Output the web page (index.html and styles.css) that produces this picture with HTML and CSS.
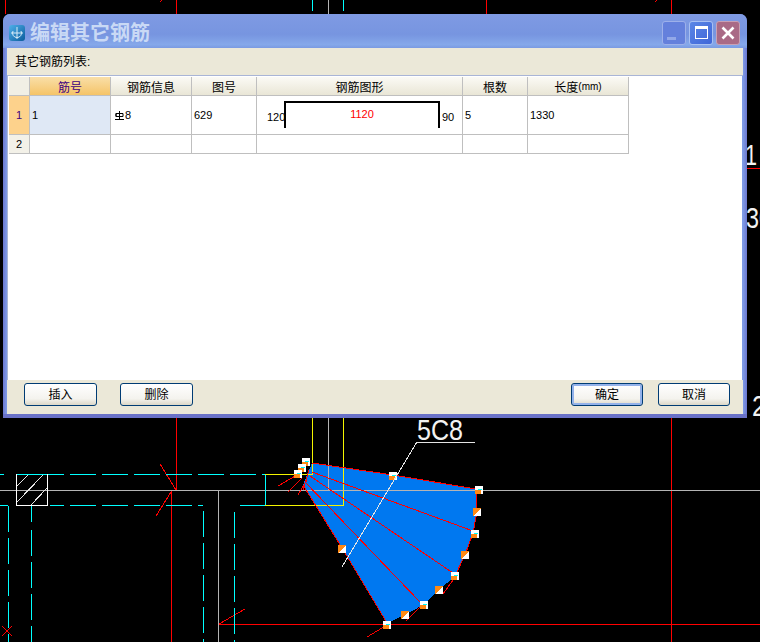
FILE: index.html
```html
<!DOCTYPE html>
<html lang="zh-CN">
<head>
<meta charset="utf-8">
<title>编辑其它钢筋</title>
<link rel="stylesheet" href="styles.css">
</head>
<body>
<div class="desktop">
  <svg class="cad" width="760" height="642" viewBox="0 0 760 642" xmlns="http://www.w3.org/2000/svg">
    <defs>
      <g id="h-a"><rect width="8" height="8" fill="#fff"/><polygon points="0,0 8,0 0,8" fill="#ff8a14"/></g>
      <g id="h-b"><rect width="8" height="8" fill="#fff"/><rect y="4" width="6" height="4" fill="#ff8a14"/><rect x="3" y="3" width="4" height="1" fill="#0ff"/></g>
    </defs>

    <!-- red grid -->
    <g class="red">
      <path d="M5.5 0V14M176.5 0V14M486.5 0V14M671.5 0V14"/>
      <path d="M176.5 418V490M171.5 491V642M671.5 418V642M219 624.5H760M747 168.5H760"/>
      <path d="M160 464L176 490M171 492L156 516M219 624L245 609M2 626L12 636M12 626L2 636M160 2L162 0M655 2L657 0"/>
    </g>

    <!-- gray lines -->
    <g class="gray">
      <path d="M0 490.5H760M218.5 491V642M328.5 418V490M328.5 0V14"/>
    </g>

    <!-- cyan dashed -->
    <g class="cyan">
      <path d="M312.5 0V11M343.5 0V11"/>
      <path d="M0 474.5H4M16 474.5H64M262 474.5H265M265.5 474V505M0 505.5H8M50 505.5H64M198 505.5H203M240 505.5H265"/>
      <path class="dash" d="M70 474.5H262M70 505.5H192"/>
      <path class="dash" d="M8.5 506V642M31.5 530V642M203.5 511V642M234.5 512V642"/>
      <path d="M31.5 506V522"/>
    </g>

    <!-- hatched column -->
    <g class="white">
      <path d="M16.5 474V505.5H47.5V474M16 505.5H38"/>
      <path class="thin" d="M28 475L17 486M43 475L17 502M47 488L31 505"/>
    </g>

    <!-- rebar fan -->
    <polygon class="fan" points="312,463 393,475 476,489 477,512 473,533 465,555 455,576 439,590 423,605 405,615 387,623 342,548 303,485"/>

    <!-- yellow frame -->
    <g class="yellow">
      <path d="M312.5 418V474.5H265M343.5 418V505.5H265"/>
    </g>
    <g class="gray"><path d="M303 490.5H477M328.5 464V490"/></g>
    <g class="red">
      <path d="M312 463L393 475L476 489L477 512L473 533L465 555L455 576M443 594L453 580M406 621L420 607M387 623L342 548L303 485"/>
      <path d="M312 472L473 531M310 476L453 573M305 482L420 602"/>
      <path d="M278 486L297 475M288 492L302 478M298 495L307 480M303 490L309 470M367 637L387 625"/>
    </g>

    <!-- handles -->
    <use href="#h-b" x="389" y="472"/>
    <use href="#h-b" x="475" y="486"/>
    <use href="#h-a" x="473" y="508"/>
    <use href="#h-b" x="471" y="530"/>
    <use href="#h-a" x="461" y="551"/>
    <use href="#h-b" x="451" y="572"/>
    <use href="#h-a" x="435" y="586"/>
    <use href="#h-b" x="420" y="601"/>
    <use href="#h-a" x="401" y="611"/>
    <use href="#h-b" x="383" y="621"/>
    <use href="#h-a" x="338" y="545"/>
    <use href="#h-b" x="302" y="458"/>
    <use href="#h-b" x="298" y="464"/>
    <use href="#h-b" x="294" y="470"/>

    <!-- leader and labels -->
    <g class="white"><path class="thin" d="M475 442H417L342 567"/></g>
    <text class="cad-text" x="417" y="440" textLength="46" lengthAdjust="spacingAndGlyphs">5C8</text>
    <text class="cad-text" x="745" y="165" textLength="12" lengthAdjust="spacingAndGlyphs">1</text>
    <text class="cad-text" x="746" y="228" textLength="26" lengthAdjust="spacingAndGlyphs">30</text>
    <text class="cad-text" x="752" y="416" textLength="14" lengthAdjust="spacingAndGlyphs">2</text>
  </svg>

  <section class="dialog">
    <header class="titlebar">
      <svg class="app-icon" width="16" height="16" viewBox="0 0 16 16" xmlns="http://www.w3.org/2000/svg">
        <defs><linearGradient id="ai" x1="0" y1="0" x2="1" y2="1"><stop offset="0" stop-color="#4fb0ea"/><stop offset="1" stop-color="#0a5c9c"/></linearGradient></defs>
        <rect width="16" height="16" rx="3" fill="url(#ai)"/>
        <path d="M8 2V14M2 8H14M4 6A4.5 4.5 0 1 0 12 6" fill="none" stroke="#d8ecf8" stroke-width="1"/>
      </svg>
      <h1 class="title">编辑其它钢筋</h1>
      <div class="win-buttons">
        <div class="win-btn win-min"><span class="min-glyph"></span></div>
        <div class="win-btn win-max"><span class="max-glyph"></span></div>
        <div class="win-btn win-close">
          <svg width="14" height="14" viewBox="0 0 14 14" xmlns="http://www.w3.org/2000/svg"><path d="M1.5 1.5L12.5 12.5M12.5 1.5L1.5 12.5" stroke="#fff" stroke-width="2.6" fill="none"/></svg>
        </div>
      </div>
    </header>

    <div class="list-label">其它钢筋列表:</div>

    <div class="grid-area">
      <div class="grid">
        <div class="hd corner"></div>
        <div class="hd hd-active">筋号</div>
        <div class="hd">钢筋信息</div>
        <div class="hd">图号</div>
        <div class="hd">钢筋图形</div>
        <div class="hd">根数</div>
        <div class="hd">长度<span class="unit">(mm)</span></div>

        <div class="rowhd rowhd-active">1</div>
        <div class="cell cell-active">1</div>
        <div class="cell">
          <svg class="rebar" width="9" height="9" viewBox="0 0 9 9" xmlns="http://www.w3.org/2000/svg"><path d="M4.5 0V8M1 2.5H8V5.5H1ZM1 2.5V5.5M0 8.5H9" fill="none" stroke="#000" stroke-width="1"/></svg>8
        </div>
        <div class="cell">629</div>
        <div class="cell cell-shape">
          <span class="dim-side">120</span>
          <div class="bracket"><span class="dim-main">1120</span></div>
          <span class="dim-side">90</span>
        </div>
        <div class="cell">5</div>
        <div class="cell">1330</div>

        <div class="rowhd">2</div>
        <div class="cell"></div>
        <div class="cell"></div>
        <div class="cell"></div>
        <div class="cell"></div>
        <div class="cell"></div>
        <div class="cell"></div>
      </div>
    </div>

    <footer class="footer">
      <button class="btn" type="button">插入</button>
      <button class="btn" type="button">删除</button>
      <div class="footer-right">
        <button class="btn btn-default" type="button">确定</button>
        <button class="btn" type="button">取消</button>
      </div>
    </footer>
  </section>
</div>
</body>
</html>
```

FILE: styles.css
```css
* { box-sizing: border-box; }

html, body { margin: 0; padding: 0; background: #000; }

body {
  font-family: "Liberation Sans", "Noto Sans CJK SC", sans-serif;
  font-size: 12px;
  color: #000;
}

.desktop {
  position: relative;
  width: 760px;
  height: 642px;
  overflow: hidden;
  background: #000;
}

/* CAD drawing */
.cad { position: absolute; left: 0; top: 0; display: block; shape-rendering: crispEdges; }
.cad path { fill: none; stroke-width: 1; }
.red path { stroke: #f00; }
.gray path { stroke: #b4b4b4; }
.cyan path { stroke: #0ff; }
.cyan .dash { stroke-dasharray: 26 6; }
.white path { stroke: #fff; }
.white .thin { stroke: #e4e4e4; }
.yellow path { stroke: #f4f400; }
.fan { fill: #0078f0; }
.cad-text {
  font-family: "Liberation Sans", sans-serif;
  font-size: 30px;
  fill: #f2f2f2;
  shape-rendering: auto;
}

/* Dialog window */
.dialog {
  position: absolute;
  left: 3px;
  top: 14px;
  width: 744px;
  height: 404px;
  display: flex;
  flex-direction: column;
  padding: 0 4px 4px;
  border-radius: 7px 7px 0 0;
  background: linear-gradient(to right, #6c78cf 0, #7f9be6 4px, #7f9be6 740px, #6c78cf 744px);
  box-shadow: inset 0 -4px 0 #6a72c8;
  overflow: hidden;
}

.titlebar {
  flex: none;
  height: 34px;
  margin: 0 -4px;
  padding: 6px 7px 3px 6px;
  display: flex;
  align-items: center;
  background: linear-gradient(to bottom, #7f9ae3 0, #7795e0 60%, #85a8ea 90%, #7a9ae2 100%);
}

.app-icon { flex: none; display: block; }

.title {
  margin: 0 0 2px 5px;
  font-family: "Noto Sans CJK SC", sans-serif;
  font-size: 20px;
  line-height: 24px;
  font-weight: 700;
  color: #c9d9f5;
}

.win-buttons { margin-left: auto; display: flex; gap: 3px; }

.win-btn {
  width: 24px;
  height: 24px;
  border: 1px solid #9db0ea;
  border-radius: 3px;
  display: flex;
  align-items: center;
  justify-content: center;
}

.win-min { background: #6480dc; align-items: flex-end; justify-content: flex-start; padding: 0 0 4px 4px; }
.min-glyph { display: block; width: 9px; height: 3px; background: #93a8e8; }
.win-max { background: linear-gradient(135deg, #5a86e6, #3f66d8); border-color: #a8c0f2; }
.max-glyph { display: block; width: 13px; height: 13px; border: 1px solid #fff; border-top-width: 3px; }
.win-close { background: #a96a86; border-color: #c8a0b4; }
.win-close svg { display: block; }

.list-label {
  flex: none;
  height: 28px;
  padding-left: 8px;
  line-height: 29px;
  background: #ebe8d8;
  border-bottom: 1px solid #a9b5d6;
}

.grid-area {
  flex: 1;
  min-height: 0;
  padding: 1px 0 0 2px;
  background: #fff;
  border-left: 1px solid #a9b5d6;
  margin-right: 1px;
}

.grid {
  margin-left: -1px;
  display: grid;
  width: 620px;
  grid-template-columns: 21px 81px 81px 65px 206px 65px 101px;
  grid-template-rows: 19px 39px 19px;
}

.hd, .rowhd, .cell {
  border-right: 1px solid #bfbfbf;
  border-bottom: 1px solid #bfbfbf;
}

.hd {
  display: flex;
  align-items: center;
  justify-content: center;
  background: linear-gradient(to bottom, #fbfaf5, #e9e6d6);
}

.corner { background: #f1efe5; }
.hd-active { background: linear-gradient(to bottom, #f9dfa8, #f5c468); color: #400080; }
.unit { font-size: 10px; }

.rowhd {
  display: flex;
  align-items: center;
  justify-content: center;
  font-size: 11px;
  background: #f3f1e8;
}
.rowhd-active { background: #fdd28c; color: #400080; }

.cell {
  display: flex;
  align-items: center;
  padding-left: 2px;
  font-size: 11px;
  background: #fff;
}
.cell-active { background: #dfe8f5; }

.rebar { display: block; margin: 0 1px 0 2px; }

.cell-shape { padding: 0; align-items: flex-start; }
.dim-side { margin-top: 14px; line-height: 15px; }
.cell-shape .dim-side:first-child { margin-left: 10px; width: 18px; }
.cell-shape .dim-side:last-child { margin-left: 2px; }

.bracket {
  flex: none;
  width: 156px;
  height: 27px;
  margin-top: 5px;
  margin-left: -1px;
  padding-top: 5px;
  border: 2px solid #000;
  border-bottom: 0;
  text-align: center;
}
.dim-main { display: block; line-height: 13px; color: #f00; }

.footer {
  flex: none;
  height: 34px;
  padding: 3px 13px 0 17px;
  display: flex;
  align-items: flex-start;
  gap: 23px;
  background: #ebe8d8;
}

.footer-right { margin-left: auto; display: flex; gap: 15px; }
.footer-right .btn { width: 72px; }

.btn {
  width: 73px;
  height: 23px;
  padding: 0 0 2px;
  font-family: inherit;
  font-size: 12px;
  color: #000;
  border: 1px solid #003c74;
  border-radius: 3px;
  background: linear-gradient(to bottom, #ffffff, #f4f3ee 70%, #dcd8c8);
}

.btn-default { box-shadow: inset 0 0 0 2px #93b2ea; }
```
